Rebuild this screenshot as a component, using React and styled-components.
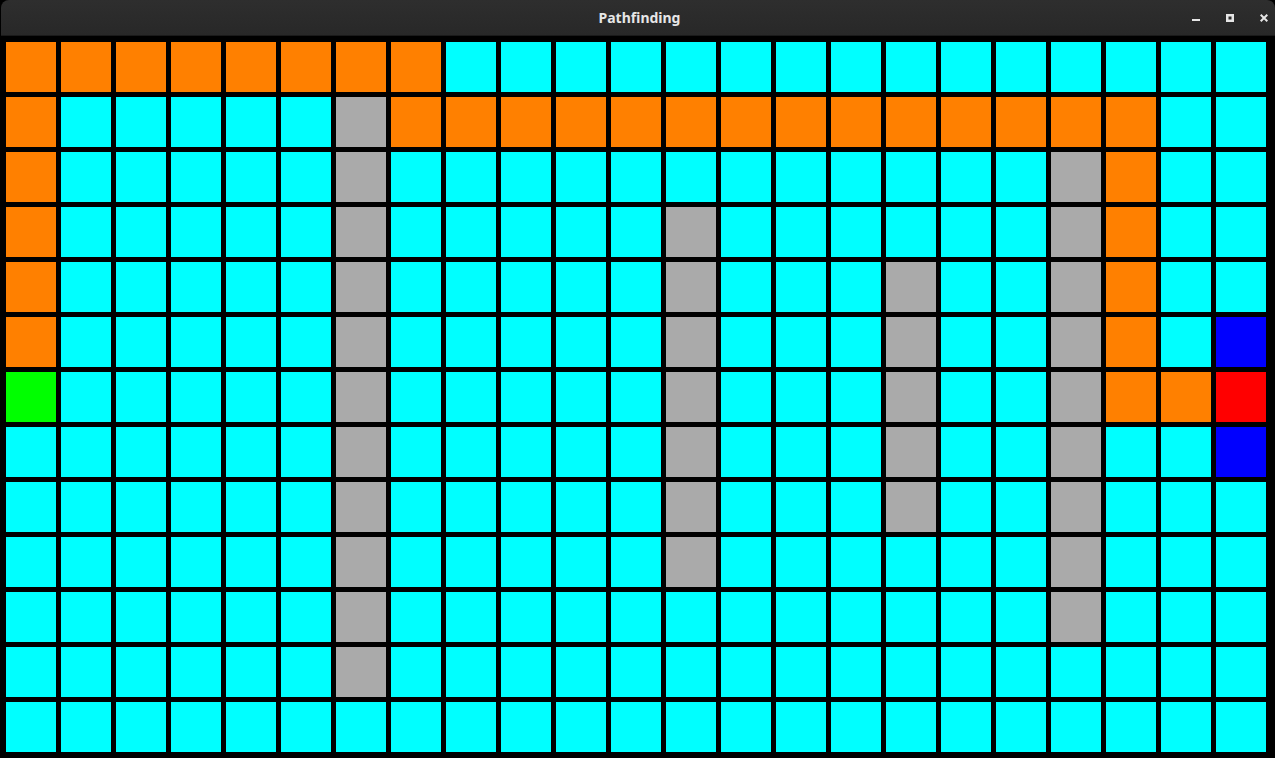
import React from "react";
import styled, { createGlobalStyle } from "styled-components";

const Global = createGlobalStyle`
  html, body { margin: 0; padding: 0; background: #000; }
  body { width: 1275px; height: 758px; overflow: hidden; font-family: "Noto Sans", "DejaVu Sans", sans-serif; }
`;

const Window = styled.div`
  width: 1275px;
  height: 758px;
  display: flex;
  flex-direction: column;
  background: #000;
  overflow: hidden;
`;

const TitleBar = styled.div`
  position: relative;
  height: 36px;
  margin: 0 0 0 1px;
  flex: none;
  box-sizing: border-box;
  border-radius: 8px 8px 0 0;
  background: linear-gradient(#2e2e2e, #282828);
  border-bottom: 1px solid #1a1a1a;
  display: flex;
  align-items: center;
  justify-content: center;
  overflow: hidden;
`;

const Title = styled.div`
  color: #e6e6e6;
  font-size: 14px;
  font-weight: 700;
  margin-left: 3px;
`;

const Controls = styled.div`
  position: absolute;
  right: -6px;
  top: 0;
  height: 36px;
  display: flex;
  align-items: center;
`;

const Ctrl = styled.div`
  width: 34px;
  height: 36px;
  display: flex;
  align-items: center;
  justify-content: center;
`;

const Grid = styled.div`
  padding: 6px 9px 6px 6px;
  display: grid;
  grid-template-columns: repeat(23, 50px);
  grid-auto-rows: 50px;
  gap: 5px;
`;

const COLORS = {
  c: "#00ffff",
  o: "#ff8000",
  g: "#aaaaaa",
  s: "#00ff00",
  r: "#ff0000",
  b: "#0000ff",
};

const Cell = styled.div`
  background: ${(p) => COLORS[p.$k]};
`;

const rows = [
  "ooooooooccccccccccccccc",
  "occcccgooooooooooooooccc".slice(0, 23),
  "occcccgccccccccccccgocc",
  "occcccgcccccgccccccgocc",
  "occcccgcccccgcccgccgocc",
  "occcccgcccccgcccgccgocb",
  "scccccgcccccgcccgccgoor",
  "ccccccgcccccgcccgccgccb",
  "ccccccgcccccgcccgccgccc",
  "ccccccgcccccgccccccgccc",
  "ccccccgccccccccccccgccc",
  "ccccccgcccccccccccccccc",
  "ccccccccccccccccccccccc",
];

rows[1] = "occcccgooooooooooooooc".padEnd(23, "c");

export default function App() {
  return (
    <Window>
      <Global />
      <TitleBar>
        <Title>Pathfinding</Title>
        <Controls>
          <Ctrl>
            <svg width="8" height="8" viewBox="0 0 8 8">
              <rect x="0" y="5" width="8" height="2" fill="#e6e6e6" />
            </svg>
          </Ctrl>
          <Ctrl>
            <svg width="8" height="8" viewBox="0 0 8 8">
              <rect x="1.25" y="1.25" width="5.5" height="5.5" fill="none" stroke="#e6e6e6" strokeWidth="2.5" />
            </svg>
          </Ctrl>
          <Ctrl>
            <svg width="8" height="8" viewBox="0 0 8 8">
              <path d="M0.7 0.7 L7.3 7.3 M7.3 0.7 L0.7 7.3" stroke="#e6e6e6" strokeWidth="2" />
            </svg>
          </Ctrl>
        </Controls>
      </TitleBar>
      <Grid>
        {rows.map((r, i) =>
          r.split("").map((k, j) => <Cell key={i + "-" + j} $k={k} />)
        )}
      </Grid>
    </Window>
  );
}
